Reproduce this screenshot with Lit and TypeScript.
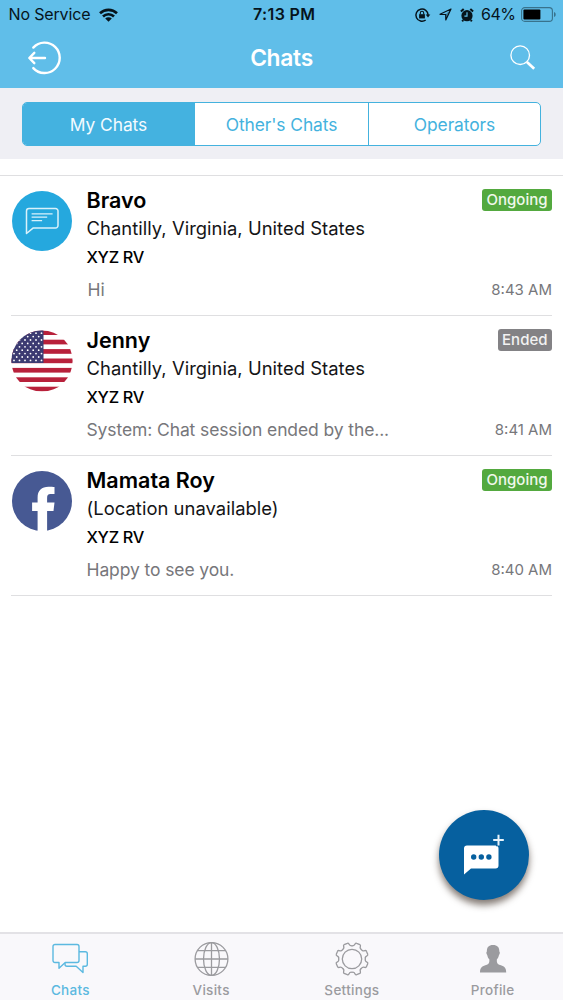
import { LitElement, html, css, svg } from "lit";
import { customElement, property } from "lit/decorators.js";

type Chat = {
  name: string;
  place: string;
  brand: string;
  message: string;
  time: string;
  status: "Ongoing" | "Ended";
  avatar: "web" | "flag" | "facebook";
};

const chats: Chat[] = [
  { name: "Bravo", place: "Chantilly, Virginia, United States", brand: "XYZ RV", message: "Hi", time: "8:43 AM", status: "Ongoing", avatar: "web" },
  { name: "Jenny", place: "Chantilly, Virginia, United States", brand: "XYZ RV", message: "System: Chat session ended by the...", time: "8:41 AM", status: "Ended", avatar: "flag" },
  { name: "Mamata Roy", place: "(Location unavailable)", brand: "XYZ RV", message: "Happy to see you.", time: "8:40 AM", status: "Ongoing", avatar: "facebook" },
];

const base = css`
  :host { display: block; box-sizing: border-box; font-family: Inter, "Liberation Sans", sans-serif; }
  * { box-sizing: border-box; }
  svg { display: block; flex: none; overflow: visible; }
`;

@customElement("status-bar")
class StatusBar extends LitElement {
  static styles = [base, css`
    :host { height: 28px; padding: 0 7px 0 8.5px; color: #06141c; font-size: 16px; line-height: 29px; }
    .bar { display: grid; grid-template-columns: 1fr auto 1fr; height: 28px; align-items: center; }
    .left, .right { display: flex; align-items: center; }
    .right { justify-content: flex-end; }
    .carrier { letter-spacing: -0.15px; margin-right: 9px; }
    .time { font-weight: 600; letter-spacing: 0.35px; padding-left: 4px; }
    .lock { margin-right: 9px; }
    .nav { margin-right: 8px; }
    .alarm { margin-right: 7.5px; }
    .pct { margin-right: 5.5px; letter-spacing: -0.5px; }
  `];
  render() {
    return html`<div class="bar">
      <div class="left">
        <span class="carrier">No Service</span>
        <svg width="19" height="14" viewBox="0 0 19 14" fill="none" stroke="#06141c" stroke-width="2.6">
          <path d="M1 5.3a12.2 12.2 0 0 1 17 0M4 8.5a7.8 7.8 0 0 1 11 0"/>
          <path d="M9.5 13.8 6.2 10.6a4.7 4.7 0 0 1 6.6 0z" fill="#06141c" stroke="none"/>
        </svg>
      </div>
      <span class="time">7:13 PM</span>
      <div class="right">
        <svg class="lock" width="15" height="14" viewBox="0 0 15 14" fill="none" stroke="#06141c" stroke-width="1.5">
          <path d="M10.7 12a6.1 6.1 0 1 1 2.4-5"/>
          <path d="M10.7 6.6h4.6L13 9.6z" fill="#06141c" stroke="none"/>
          <rect x="4.1" y="6.2" width="5.8" height="4.2" fill="#06141c" stroke="none"/>
          <path d="M5.3 6.4V5a1.7 1.7 0 0 1 3.4 0v1.4" stroke-width="1.1"/>
        </svg>
        <svg class="nav" width="13" height="13" viewBox="0 0 13 13" fill="none" stroke="#06141c" stroke-width="1.2" stroke-linejoin="round">
          <path d="M12 1 1 6.300l5.700.2.100 5.500z"/>
          <path d="M12 1 6.700 6.500l.1 5.500z" fill="#06141c" fill-opacity=".35" stroke="none"/>
        </svg>
        <svg class="alarm" width="14" height="14" viewBox="0 0 14 14">
          <circle cx="7" cy="7.7" r="5.6" fill="#06141c"/>
          <path d="M.9 3.6 3.7 1M13.1 3.6 10.3 1M3.2 12l-1 1.3M10.8 12l1 1.3" stroke="#06141c" stroke-width="2"/>
          <path d="M7 4.2v3.9H4.4" fill="none" stroke="#60bee9" stroke-width="1.2"/>
        </svg>
        <span class="pct">64%</span>
        <svg width="35" height="15" viewBox="0 0 35 15">
          <rect x=".6" y=".6" width="30.8" height="13.8" rx="3.2" fill="none" stroke="#38728c" stroke-width="1.1"/>
          <rect x="2.4" y="2.4" width="17" height="10.2" rx="1" fill="#000"/>
          <path d="M33 5v5c1.3-.6 1.7-1.5 1.7-2.5S34.300 5.600 33 5z" fill="#38728c"/>
        </svg>
      </div>
    </div>`;
  }
}

@customElement("nav-header")
class NavHeader extends LitElement {
  static styles = [base, css`
    :host { height: 60px; padding: 0 28px; }
    .bar { display: grid; grid-template-columns: 1fr auto 1fr; height: 58px; align-items: center; }
    .title { color: #fff; font-size: 22.800px; font-weight: 600; line-height: 59px; letter-spacing: -0.300px; }
    .search { justify-self: end; }
  `];
  render() {
    return html`<div class="bar">
      <svg width="34" height="34" viewBox="28 40 34 34" fill="none" stroke="#fff" stroke-width="2.4" stroke-linecap="round" stroke-linejoin="round">
        <path d="M33.300 46.600a15.200 15.200 0 1 1 0 20.500"/>
        <path d="M45 57H29.500M34.300 51.800 29.300 57l5 5.200"/>
      </svg>
      <span class="title">Chats</span>
      <svg class="search" width="26" height="26" viewBox="510 44 26 26" fill="none" stroke="#fff">
        <circle cx="521.200" cy="54.200" r="9.300" stroke-width="1.300"/>
        <path d="M527.900 60.900l7.300 6.900" stroke-width="2.700"/>
      </svg>
    </div>`;
  }
}

@customElement("segment-control")
class SegmentControl extends LitElement {
  static styles = [base, css`
    :host { height: 71px; padding: 14px 22px 0; background: #efeff4; }
    .group { display: grid; grid-template-columns: 171px 174px 1fr; height: 44px; background: #fff; border: 1px solid #44b2de; border-radius: 5px; overflow: hidden; }
    .seg { display: flex; align-items: center; justify-content: center; color: #44b2de; font-size: 17.400px; letter-spacing: -0.080px; border-left: 1px solid #44b2de; }
    .seg:first-child { border-left: 0; }
    .on { background: #44b2e0; color: #f4fbff; }
  `];
  render() {
    return html`<div class="group">
      <div class="seg on">My Chats</div>
      <div class="seg">Other's Chats</div>
      <div class="seg">Operators</div>
    </div>`;
  }
}

const starRows = Array.from({ length: 9 }, (_, r) => r);

const avatars = {
  web: () => html`<svg width="62" height="62" viewBox="0 0 62 62">
    <circle cx="31" cy="31" r="30" fill="#25a8de"/>
    <g fill="none" stroke="#d9f1fb" stroke-width="1.500" stroke-linejoin="round">
      <path d="M18 18.600h26.500a2.500 2.500 0 0 1 2.500 2.500v14.300a2.500 2.500 0 0 1-2.500 2.500H22.300L15.500 43.500V21.100a2.500 2.500 0 0 1 2.500-2.500z"/>
      <path d="M20.600 23.800h21M20.600 27.200h15.600M20.600 30.700h10.500" stroke-width="1.300"/>
    </g></svg>`,
  flag: () => html`<svg width="62" height="62" viewBox="0 0 62 62">
    <clipPath id="disc"><circle cx="31" cy="31" r="30.600"/></clipPath>
    <g clip-path="url(#disc)">
      <rect width="62" height="62" fill="#fff"/>
      ${[0, 1, 2, 3, 4, 5, 6].map((i) => svg`<rect x="0" y=${0.3 + i * 9.4} width="62" height="4.7" fill="#b8213b"/>`)}
      <rect x="0" y="0" width="32.500" height="33" fill="#3c3b72"/>
      ${starRows.map((r) => Array.from({ length: 6 }, (_, c) => svg`<circle cx=${(r % 2 ? 0.2 : 3) + c * 5.5} cy=${3.2 + r * 3.4} r="0.900" fill="#fff"/>`))}
    </g></svg>`,
  facebook: () => html`<svg width="62" height="62" viewBox="0 0 62 62">
    <circle cx="31" cy="31" r="30" fill="#475993"/>
    <path d="M26.600 62V40.900h-5.500v-8.500h5.500v-4.800c0-7.400 4.200-10.800 10.900-10.800 2.400 0 4.700.1 6 .3v6.900h-3.900c-2.800 0-3.500 1.500-3.500 3.900v4.500h7.400l-1 8.500h-6.400V62z" fill="#fff"/>
  </svg>`,
};

@customElement("chat-row")
class ChatRow extends LitElement {
  @property({ attribute: false }) chat!: Chat;
  static styles = [base, css`
    :host { height: 140px; padding: 0 11px; }
    .row { display: grid; grid-template-columns: 75.500px 1fr; height: 140px; padding: 10px 0 11px; border-bottom: 1px solid #dfdfe1; }
    .avatar { padding: 4px 0 0; margin-left: -0.500px; }
    .line { display: flex; justify-content: space-between; align-items: center; white-space: nowrap; }
    .top { height: 28px; }
    .name { font-size: 21.500px; font-weight: 600; line-height: 28px; color: #000; }
    .place { height: 28px; font-size: 18.400px; line-height: 28px; letter-spacing: 0.040px; color: #141416; }
    .brand { height: 32px; font-size: 16.300px; line-height: 31px; letter-spacing: -0.300px; font-weight: 500; color: #000; }
    .message { font-size: 17.500px; line-height: 31px; letter-spacing: -0.110px; color: #77777b; }
    .message.short { padding-left: 1px; }
    .time { font-size: 15px; line-height: 31px; letter-spacing: 0; color: #77777b; }
    .badge { height: 22px; padding: 0 4.500px; border-radius: 3px; font-size: 15px; line-height: 22px; letter-spacing: 0; color: #f0f8ec; background: #53a93f; font-weight: 500; }
    .Ended { background: #838285; color: #f2f2f2; }
  `];
  render() {
    const c = this.chat;
    return html`<div class="row">
      <div class="avatar">${avatars[c.avatar]()}</div>
      <div class="body">
        <div class="line top"><span class="name">${c.name}</span><span class="badge ${c.status}">${c.status}</span></div>
        <div class="place">${c.place}</div>
        <div class="brand">${c.brand}</div>
        <div class="line"><span class="message ${c.message.length < 4 ? "short" : ""}">${c.message}</span><span class="time">${c.time}</span></div>
      </div>
    </div>`;
  }
}

/* Outline of an eight-toothed cog centred on 17,17, with rounded valleys between the teeth. */
const cog = (() => {
  const at = (deg: number, r: number) => {
    const a = (deg * Math.PI) / 180;
    return `${(17 + r * Math.cos(a)).toFixed(2)} ${(17 + r * Math.sin(a)).toFixed(2)}`;
  };
  let d = "";
  for (let i = 0; i < 8; i++) {
    const m = i * 45 + 22.5;
    d += `${i ? "L" : "M"}${at(m - 11, 15.2)}Q${at(m - 9.5, 16.6)} ${at(m - 6, 16.4)}L${at(m + 6, 16.4)}Q${at(m + 9.5, 16.6)} ${at(m + 11, 15.2)}Q${at(m + 13, 13)} ${at(m + 22.5, 13.3)}Q${at(m + 32, 13)} ${at(m + 34, 15.2)}`;
  }
  return d + "z";
})();

@customElement("tab-bar")
class TabBar extends LitElement {
  static styles = [base, css`
    :host { height: 68px; background: #f9f8fb; border-top: 2px solid #e3e2e6; }
    .tabs { display: grid; grid-template-columns: repeat(4, 1fr); height: 66px; }
    .tab { display: flex; flex-direction: column; align-items: center; padding-top: 7px; color: #9b9b9f; font-size: 13.500px; font-weight: 500; line-height: 17px; letter-spacing: 0.300px; gap: 5px; }
    .on { color: #5cb9e0; }
  `];
  render() {
    return html`<div class="tabs">
      <div class="tab on">
        <svg width="36" height="36" viewBox="0 0 36 36" fill="none" stroke="#5cb9e0" stroke-width="1.400" stroke-linejoin="round">
          <path d="M3 3.500h22a2 2 0 0 1 2 2v14a2 2 0 0 1-2 2H13.200L7 27.300V21.500H3a2 2 0 0 1-2-2v-14a2 2 0 0 1 2-2z"/>
          <path d="M27 10.800h6.300a2 2 0 0 1 2 2v10.500a2 2 0 0 1-2 2h-2.300v6.200l-6.800-6.200H15a2 2 0 0 1-2-2v-1.200"/>
        </svg>Chats</div>
      <div class="tab">
        <svg width="36" height="36" viewBox="0 0 36 36" fill="none" stroke="#9b9b9f" stroke-width="1.300">
          <circle cx="18.500" cy="18" r="16.400"/><ellipse cx="18.500" cy="18" rx="8" ry="16.400"/>
          <path d="M18.500 1.600v32.800M2.100 18h32.800M4.500 9.700h28M4.500 26.300h28"/>
        </svg>Visits</div>
      <div class="tab">
        <svg width="36" height="36" viewBox="-1 -1 36 36" fill="none" stroke="#9b9b9f" stroke-width="1.300" stroke-linejoin="round">
          <path d=${cog}/><circle cx="17" cy="17" r="9.700"/>
        </svg>Settings</div>
      <div class="tab">
        <svg width="36" height="36" viewBox="1 0 36 36" fill="#9b9b9f">
          <path d="M19 4c4.300 0 6.500 2.300 6.300 6.600.8.500.7 2.500-.3 3.400-.4 2-1 3.200-2.100 4.200-.3 3.500.3 4.800 3.300 5.800 3.700 1.200 6 2.300 6 7.500H6c0-5.200 2.300-6.300 6-7.500 3-1 3.600-2.300 3.300-5.800-1.100-1-1.700-2.200-2.100-4.200-1-.9-1.100-2.900-.3-3.400C12.700 6.300 14.700 4 19 4z"/>
        </svg>Profile</div>
    </div>`;
  }
}

@customElement("app-root")
class AppRoot extends LitElement {
  static styles = [base, css`
    :host { display: flex; flex-direction: column; position: relative; width: 563px; height: 1000px; background: #fff; overflow: hidden; }
    .header { height: 88px; background: #60bee9; flex: none; }
    .list { flex: 1; padding-top: 16px; }
    .rows { border-top: 1px solid #dfdfe1; }
    .fab { position: absolute; left: 439px; top: 809.500px; width: 90px; height: 90px; border-radius: 50%; background: #06609f; box-shadow: 0 5px 7px rgba(50, 35, 25, 0.600); }
  `];
  render() {
    return html`
      <div class="header"><status-bar></status-bar><nav-header></nav-header></div>
      <segment-control></segment-control>
      <div class="list"><div class="rows">${chats.map((c) => html`<chat-row .chat=${c}></chat-row>`)}</div></div>
      <tab-bar></tab-bar>
      <div class="fab">
        <svg width="90" height="90" viewBox="0 0 90 90">
          <path d="M28 35.500h28.500a3 3 0 0 1 3 3v17a3 3 0 0 1-3 3H32l-7 6V38.300a3 3 0 0 1 3-2.800z" fill="#fff"/>
          <circle cx="34.700" cy="47" r="2.700" fill="#06609f"/><circle cx="42.300" cy="47" r="2.700" fill="#06609f"/><circle cx="49.900" cy="47" r="2.700" fill="#06609f"/>
          <path d="M59.500 24.300v12M53.500 30.300h12" stroke="#06609f" stroke-width="5"/>
          <path d="M59.500 24.800v10.600M54.200 30.100h10.600" stroke="#e9f4fb" stroke-width="2"/>
        </svg>
      </div>`;
  }
}
